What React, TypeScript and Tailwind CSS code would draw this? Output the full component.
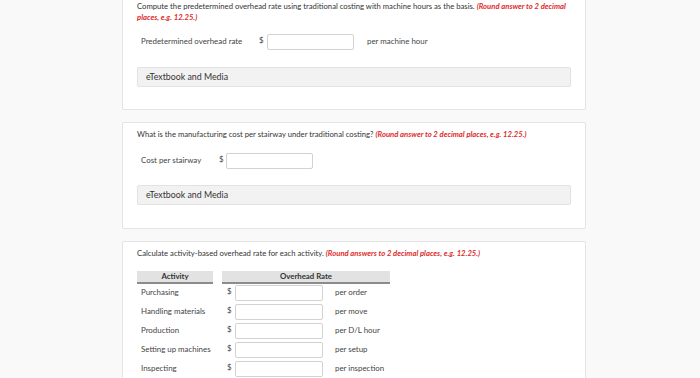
import React from "react";

const font = { fontFamily: "Lato, 'Open Sans', sans-serif" };

function Red({ children }: { children: React.ReactNode }) {
  return <span className="font-bold italic text-[#e02b2b]">{children}</span>;
}

function Input({ w = "w-[87px]" }: { w?: string }) {
  return <div className={`${w} h-[16px] border border-[#d2d2d2] rounded-[2px] bg-white`} />;
}

function EText() {
  return (
    <div className="h-[20px] bg-[#f2f2f2] border border-[#e2e2e2] rounded-[2px] flex items-center pl-[8px] text-[8.8px] text-[#333]">
      eTextbook and Media
    </div>
  );
}

const rows = [
  ["Purchasing", "per order"],
  ["Handling materials", "per move"],
  ["Production", "per D/L hour"],
  ["Setting up machines", "per setup"],
  ["Inspecting", "per inspection"],
];

export default function App() {
  return (
    <div className="w-[700px] h-[378px] overflow-hidden bg-[#f9f9f9]" style={font}>
      <div className="ml-[122px] w-[464px] flex flex-col gap-[12px] -mt-[8px]">
        {/* Card 1 */}
        <div className="bg-white border border-[#e4e4e4] rounded-[2px] px-[14px] pt-[8px] pb-[22px]">
          <div className="text-[7.7px] leading-[11px] text-[#333]">
            Compute the predetermined overhead rate using traditional costing with machine hours as the basis.{" "}
            <Red>(Round answer to 2 decimal places, e.g. 12.25.)</Red>
          </div>
          <div className="flex items-center mt-[11px] text-[7.9px] text-[#444]">
            <div className="w-[122px] pl-[4px]">Predetermined overhead rate</div>
            <div className="w-[8px] self-start pt-[1px]">$</div>
            <Input />
            <div className="ml-[13px]">per machine hour</div>
          </div>
          <div className="mt-[17px]">
            <EText />
          </div>
        </div>

        {/* Card 2 */}
        <div className="bg-white border border-[#e4e4e4] rounded-[2px] px-[14px] pt-[6px] pb-[23px]">
          <div className="text-[7.7px] leading-[11px] text-[#333]">
            What is the manufacturing cost per stairway under traditional costing?{" "}
            <Red>(Round answer to 2 decimal places, e.g. 12.25.)</Red>
          </div>
          <div className="flex items-center mt-[13px] text-[7.9px] text-[#444]">
            <div className="w-[82px] pl-[4px]">Cost per stairway</div>
            <div className="w-[7px] self-start pt-[1px]">$</div>
            <Input />
          </div>
          <div className="mt-[16px]">
            <EText />
          </div>
        </div>

        {/* Card 3 */}
        <div className="bg-white border border-[#e4e4e4] rounded-[2px] px-[14px] pt-[6px] pb-[30px]">
          <div className="text-[7.7px] leading-[11px] text-[#333]">
            Calculate activity-based overhead rate for each activity.{" "}
            <Red>(Round answers to 2 decimal places, e.g. 12.25.)</Red>
          </div>
          <div className="flex mt-[12px] text-[7.8px] font-bold text-[#333]">
            <div className="w-[76px] h-[13px] bg-[#e2e2e2] border-b-2 border-[#8c8c8c] flex items-center justify-center">
              Activity
            </div>
            <div className="ml-[9px] w-[168px] h-[13px] bg-[#e2e2e2] border-b-2 border-[#8c8c8c] flex items-center justify-center">
              Overhead Rate
            </div>
          </div>
          <div className="flex flex-col gap-[3px] mt-[1px] text-[7.9px] text-[#444]">
            {rows.map(([a, u]) => (
              <div key={a} className="flex items-center h-[16px]">
                <div className="w-[76px] pl-[4px] whitespace-nowrap">{a}</div>
                <div className="ml-[9px] w-[13px] pl-[5px] self-start pt-[1px]">$</div>
                <Input w="w-[88px]" />
                <div className="ml-[12px]">{u}</div>
              </div>
            ))}
          </div>
        </div>
      </div>
    </div>
  );
}
